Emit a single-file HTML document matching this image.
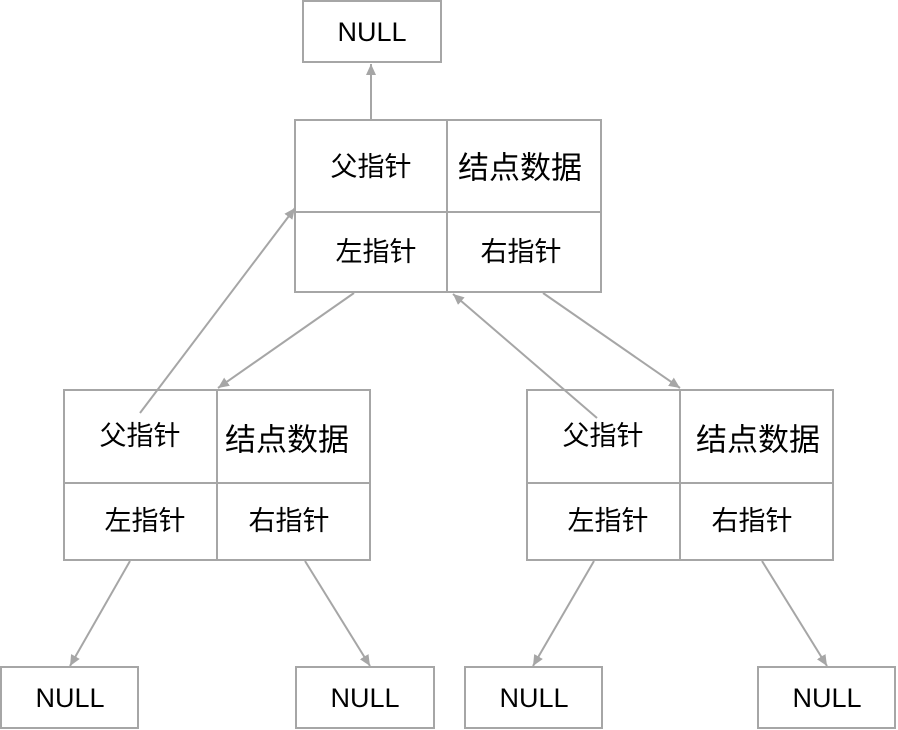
<!DOCTYPE html>
<html><head><meta charset="utf-8"><style>
html,body{margin:0;padding:0;background:#fff;}
svg{display:block}
text{font-family:"Liberation Sans","Noto Sans CJK SC",sans-serif;fill:#000;text-anchor:middle;dominant-baseline:central}
.c{font-size:27px}
.d{font-size:31px}
.n{font-size:27px}
</style></head><body>
<svg width="898" height="730" viewBox="0 0 898 730" xmlns="http://www.w3.org/2000/svg">
<defs><marker id="a" markerWidth="12" markerHeight="12" refX="11" refY="5" orient="auto" markerUnits="userSpaceOnUse"><path d="M0,0 L11,5 L0,10 z" fill="#a6a6a6"/></marker></defs>
<g fill="none" stroke="#a6a6a6" stroke-width="2">
<rect x="303" y="1" width="138" height="61"/>
<rect x="295" y="120" width="306" height="172"/><line x1="447" y1="120" x2="447" y2="292"/><line x1="295" y1="212" x2="601" y2="212"/>
<rect x="64" y="390" width="306" height="170"/><line x1="217" y1="390" x2="217" y2="560"/><line x1="64" y1="483" x2="370" y2="483"/>
<rect x="527" y="390" width="306" height="170"/><line x1="680" y1="390" x2="680" y2="560"/><line x1="527" y1="483" x2="833" y2="483"/>
<rect x="1" y="667" width="137" height="61"/>
<rect x="296" y="667" width="138" height="61"/>
<rect x="465" y="667" width="137" height="61"/>
<rect x="758" y="667" width="137" height="61"/>
<g marker-end="url(#a)">
<line x1="371" y1="120" x2="371" y2="64"/>
<line x1="140" y1="413" x2="295" y2="208"/>
<line x1="354" y1="293" x2="218" y2="388"/>
<line x1="597" y1="418" x2="453" y2="294"/>
<line x1="543" y1="293" x2="680" y2="388"/>
<line x1="130" y1="561" x2="70" y2="666"/>
<line x1="305" y1="561" x2="370" y2="666"/>
<line x1="594" y1="561" x2="533" y2="666"/>
<line x1="762" y1="561" x2="827" y2="666"/>
</g></g>
<text class="n" x="372" y="32">NULL</text>
<text class="n" x="70" y="698">NULL</text>
<text class="n" x="365" y="698">NULL</text>
<text class="n" x="534" y="698">NULL</text>
<text class="n" x="827" y="698">NULL</text>
<text class="c" x="371" y="167">父指针</text>
<text class="d" x="520" y="168">结点数据</text>
<text class="c" x="376" y="252">左指针</text>
<text class="c" x="521" y="252">右指针</text>
<text class="c" x="140" y="436">父指针</text>
<text class="d" x="287" y="440">结点数据</text>
<text class="c" x="145" y="521">左指针</text>
<text class="c" x="289" y="521">右指针</text>
<text class="c" x="603" y="436">父指针</text>
<text class="d" x="758" y="440">结点数据</text>
<text class="c" x="608" y="521">左指针</text>
<text class="c" x="752" y="521">右指针</text>
</svg>
</body></html>
